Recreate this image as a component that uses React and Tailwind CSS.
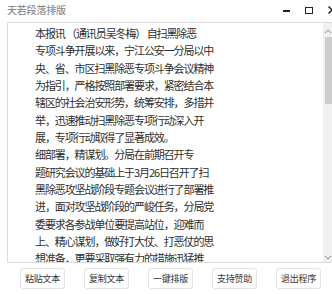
import React from 'react';

const lines = [
  '本报讯 （通讯员吴冬梅） 自扫黑除恶',
  '专项斗争开展以来，宁江公安一分局以中',
  '央、省、市区扫黑除恶专项斗争会议精神',
  '为指引，严格按照部署要求，紧密结合本',
  '辖区的社会治安形势，统筹安排，多措并',
  '举，迅速推动扫黑除恶专项行动深入开',
  '展，专项行动取得了显著成效。',
  '细部署，精谋划。分局在前期召开专',
  '题研究会议的基础上于3月26日召开了扫',
  '黑除恶攻坚战阶段专题会议进行了部署推',
  '进，面对攻坚战阶段的严峻任务，分局党',
  '委要求各参战单位要提高站位，迎难而',
  '上、精心谋划，做好打大仗、打恶仗的思',
  '想准备，更要采取强有力的措施迅猛推',
];

const buttons = ['粘贴文本', '复制文本', '一键排版', '支持赞助', '退出程序'];

const font = { fontFamily: '"Noto Sans CJK SC", "Noto Sans", sans-serif' };

export default function App() {
  return (
    <div className="w-[332px] h-[294px] bg-white overflow-hidden flex flex-col" style={font}>
      {/* title bar */}
      <div className="h-[20px] flex items-center pl-[7px] shrink-0">
        <span className="text-[10px] leading-none text-[#7a7a7a] tracking-[-0.2px]">天若段落排版</span>
        <div className="ml-auto mr-[-4px] flex items-center">
          <div className="w-[7px] h-[2px] bg-[#222] mt-[2px]" />
          <div className="w-[8px] h-[7px] border-[1.5px] border-[#222] ml-[15px]" />
          <svg className="ml-[15px]" width="8" height="8" viewBox="0 0 8 8">
            <path d="M0.5 0.5 L7.5 7.5 M7.5 0.5 L0.5 7.5" stroke="#222" strokeWidth="1.5" />
          </svg>
        </div>
      </div>

      {/* text area */}
      <div className="mt-[2px] ml-[7px] w-[345px] h-[241px] border border-[#dcdcdc] flex shrink-0 overflow-hidden">
        <div className="w-[315px] pl-[27px] pt-[2px] text-[#2e2e2e] text-[11px] leading-[17.33px] tracking-[-1.1px]">
          {lines.map((l, i) => (
            <div key={i} className="whitespace-nowrap">{l}</div>
          ))}
        </div>
        <div className="w-[17px] bg-[#f0f0f0] flex flex-col items-start pl-[1px]">
          <svg width="8" height="8" viewBox="0 0 8 8" className="mt-[5px]">
            <path d="M1 5 L4 2 L7 5" stroke="#8a8a8a" strokeWidth="1" fill="none" />
          </svg>
          <div className="mt-[1px] ml-[1px] w-[15px] h-[67px] bg-[#cdcdcd]" />
          <svg width="8" height="8" viewBox="0 0 8 8" className="mt-auto mb-[1px]">
            <path d="M1 3 L4 6 L7 3" stroke="#8a8a8a" strokeWidth="1" fill="none" />
          </svg>
        </div>
      </div>

      {/* buttons */}
      <div className="flex items-center gap-[19px] pl-[20px] mt-[5px]">
        {buttons.map((b) => (
          <button
            key={b}
            className="w-[45px] h-[21px] rounded-[3px] border border-[#e3e3e3] bg-white text-[9px] leading-none text-[#333] tracking-[-0.3px] flex items-center justify-center"
          >
            {b}
          </button>
        ))}
      </div>
    </div>
  );
}
